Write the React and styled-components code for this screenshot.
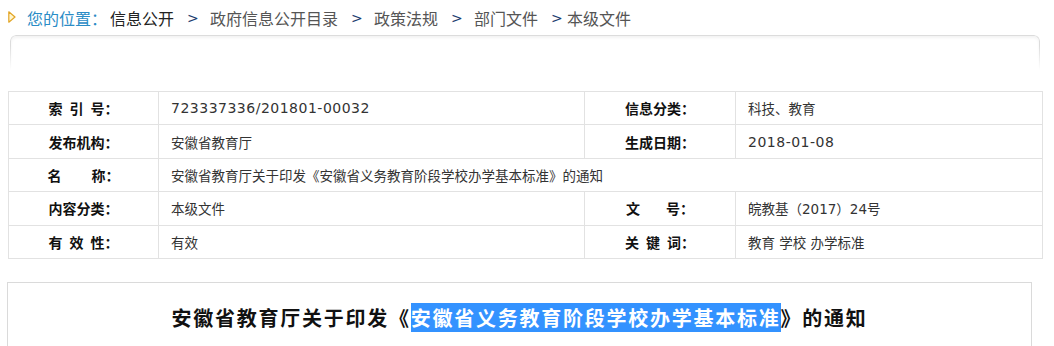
import React from 'react';
import styled, { createGlobalStyle } from 'styled-components';

const GlobalStyle = createGlobalStyle`
  body {
    margin: 0;
    background: #fff;
    font-family: "DejaVu Sans", "Noto Sans CJK SC", sans-serif;
    color: #333;
  }
`;

const Page = styled.div`
  width: 1054px;
  height: 346px;
  overflow: hidden;
`;

const Crumbs = styled.div`
  display: flex;
  align-items: center;
  height: 35px;
  padding: 0 0 0 8px;
  font-family: "Noto Sans CJK SC", sans-serif;
  font-size: 16px;
  color: #555;
`;

const Arrow = styled.svg`
  width: 8px;
  height: 12px;
  margin: 0 11px 1px 0;
`;

const Here = styled.span`
  color: #2a8cc6;
  margin-right: 3px;
`;

const Crumb = styled.span`
  color: ${p => (p.$first ? '#222' : '#555')};
`;

const Sep = styled.span`
  display: inline-block;
  width: 10px;
  font-family: "DejaVu Sans", sans-serif;
  font-size: 14px;
  color: #1c3c6e;
  margin: 0 ${p => (p.$last ? '6px' : '13px')} 0 13px;
`;

const Panel = styled.div`
  margin: 0 14px 0 10px;
  height: 34px;
  border: 1px solid #dcdcdc;
  border-bottom: none;
  border-radius: 6px 6px 0 0;
  box-shadow: inset 0 2px 3px rgba(0, 0, 0, 0.05);
  -webkit-mask-image: linear-gradient(to bottom, #000 30%, transparent 100%);
  mask-image: linear-gradient(to bottom, #000 30%, transparent 100%);
`;

const Table = styled.table`
  margin: 21px 0 0 8px;
  width: 1034px;
  border-collapse: collapse;
  table-layout: fixed;
  font-size: 13px;
`;

const Row = styled.tr`
  height: 33.4px;
`;

const Label = styled.td`
  border: 1px solid #e2e2e2;
  text-align: center;
  font-weight: bold;
  font-size: 14px;
  color: #111;
  font-family: "Noto Sans CJK SC", sans-serif;
  white-space: nowrap;
  padding: 0;
`;

const Ch = styled.span`
  margin-right: ${p => p.$gap}px;
`;

const Value = styled.td`
  border: 1px solid #e2e2e2;
  padding: 0 0 0 12px;
  color: #333;
  font-size: ${p => (p.$num ? '14px' : '13.5px')};
  letter-spacing: ${p => (p.$num ? '0.5px' : '0')};
`;

const TitleBox = styled.div`
  margin: 23px 0 0 7px;
  width: 1025px;
  height: 80px;
  border: 1px solid #dadada;
  border-bottom: none;
  padding-top: 23px;
  box-sizing: border-box;
  text-align: center;
`;

const Title = styled.h1`
  margin: 0;
  font-family: "Noto Sans CJK SC", sans-serif;
  font-size: 20px;
  font-weight: bold;
  letter-spacing: 1.75px;
  line-height: 24px;
  color: #111;
`;

const Picked = styled.span`
  background: #3392ff;
  color: #fff;
`;

const rows = [
  { a: ['索引号：', 7], b: '723337336/201801-00032', bNum: true, c: ['信息分类：', 0], d: '科技、教育' },
  { a: ['发布机构：', 0], b: '安徽省教育厅', c: ['生成日期：', 0], d: '2018-01-08', dNum: true },
  { a: ['名称：', 30], wide: '安徽省教育厅关于印发《安徽省义务教育阶段学校办学基本标准》的通知' },
  { a: ['内容分类：', 0], b: '本级文件', c: ['文号：', 26], d: '皖教基（2017）24号' },
  { a: ['有效性：', 7], b: '有效', c: ['关键词：', 7], d: '教育 学校 办学标准' },
];

const path = ['政府信息公开目录', '政策法规', '部门文件', '本级文件'];

function LabelText({ text, gap }) {
  const chars = [...text];
  return chars.map((ch, i) => (
    <Ch key={i} $gap={i < chars.length - 2 ? gap : 0}>{ch}</Ch>
  ));
}

export default function App() {
  return (
    <Page>
      <GlobalStyle />
      <Crumbs>
        <Arrow viewBox="0 0 8 12">
          <path d="M0.8 0.8 L7 6 L0.8 11.2 Z" fill="#fff6cf" stroke="#e3a526" strokeWidth="1.2" strokeLinejoin="round" />
        </Arrow>
        <Here>您的位置：</Here>
        <Crumb $first>信息公开</Crumb>
        {path.map((p, i) => (
          <React.Fragment key={p}>
            <Sep $last={i === path.length - 1}>&gt;</Sep>
            <Crumb>{p}</Crumb>
          </React.Fragment>
        ))}
      </Crumbs>
      <Panel />
      <Table>
        <colgroup>
          <col style={{ width: 150 }} />
          <col style={{ width: 426 }} />
          <col style={{ width: 151 }} />
          <col style={{ width: 307 }} />
        </colgroup>
        <tbody>
          {rows.map(r => (
            <Row key={r.a[0]}>
              <Label><LabelText text={r.a[0]} gap={r.a[1]} /></Label>
              {r.wide ? (
                <Value colSpan={3}>{r.wide}</Value>
              ) : (
                <>
                  <Value $num={r.bNum}>{r.b}</Value>
                  <Label><LabelText text={r.c[0]} gap={r.c[1]} /></Label>
                  <Value $num={r.dNum}>{r.d}</Value>
                </>
              )}
            </Row>
          ))}
        </tbody>
      </Table>
      <TitleBox>
        <Title>
          安徽省教育厅关于印发《<Picked>安徽省义务教育阶段学校办学基本标准</Picked>》的通知
        </Title>
      </TitleBox>
    </Page>
  );
}
